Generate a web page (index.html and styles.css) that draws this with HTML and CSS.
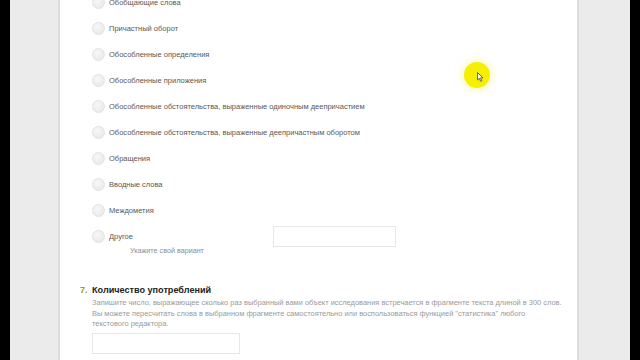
FILE: index.html
```html
<!DOCTYPE html>
<html>
<head>
<meta charset="utf-8">
<link rel="stylesheet" href="styles.css">
</head>
<body>
<div class="frame">
  <div class="edge"></div>
  <div class="side side-left"></div>
  <main class="page">
    <ul class="options">
      <li class="opt"><span class="radio"></span><span>Обобщающие слова</span></li>
      <li class="opt"><span class="radio"></span><span>Причастный оборот</span></li>
      <li class="opt"><span class="radio"></span><span>Обособленные определения</span></li>
      <li class="opt"><span class="radio"></span><span>Обособленные приложения</span></li>
      <li class="opt"><span class="radio"></span><span>Обособленные обстоятельства, выраженные одиночным деепричастием</span></li>
      <li class="opt"><span class="radio"></span><span>Обособленные обстоятельства, выраженные деепричастным оборотом</span></li>
      <li class="opt"><span class="radio"></span><span>Обращения</span></li>
      <li class="opt"><span class="radio"></span><span>Вводные слова</span></li>
      <li class="opt"><span class="radio"></span><span>Междометия</span></li>
      <li class="other">
        <div class="other-label">
          <div class="opt"><span class="radio"></span><span>Другое</span></div>
          <div class="hint">Укажите свой вариант</div>
        </div>
        <div class="input other-input"></div>
      </li>
    </ul>
    <section class="question">
      <h2 class="q-title"><span class="q-num">7.</span>Количество употреблений</h2>
      <p class="q-desc">Запишите число, выражающее сколько раз выбранный вами объект исследования встречается в фрагменте текста длиной в 300 слов.<br>Вы можете пересчитать слова в выбранном фрагменте самостоятельно или воспользоваться функцией "статистика" любого<br>текстового редактора.</p>
      <div class="input count-input"></div>
    </section>
    <div class="cursor-hl">
      <svg class="cursor" width="7" height="10" viewBox="0 0 7 10"><path d="M0.5 0.5 L0.5 8 L2.3 6.3 L3.6 9.3 L4.8 8.8 L3.5 5.9 L6 5.9 Z" fill="#fff" stroke="#444" stroke-width="0.8"/></svg>
    </div>
  </main>
  <div class="side side-right"></div>
  <div class="edge edge-right"></div>
</div>
</body>
</html>
```
FILE: styles.css
```css
html, body {
  margin: 0;
  padding: 0;
  width: 640px;
  height: 360px;
  overflow: hidden;
  background: #000;
  font-family: "Liberation Sans", Arial, sans-serif;
}
.frame {
  display: flex;
  width: 640px;
  height: 360px;
}
.edge { width: 10px; background: #000; flex: none; }
.edge-right { width: 10px; }
.side {
  background: #ebebeb;
  flex: none;
}
.side-left { width: 48px; border-right: 2px solid #dcdcdc; }
.side-right { width: 51px; border-left: 2px solid #dcdcdc; }
.page {
  position: relative;
  width: 517px;
  flex: none;
  background: #fff;
  overflow: hidden;
}
.options {
  list-style: none;
  margin: -11px 0 0 0;
  padding: 0 0 0 32px;
}
.opt {
  display: flex;
  align-items: center;
  gap: 4px;
  height: 26px;
  font-size: 7.5px;
  color: #575757;
}
.radio {
  width: 11px;
  height: 11px;
  border-radius: 50%;
  border: 1px solid #e2e2e2;
  background: radial-gradient(circle at 40% 35%, #f7f7f7, #e6e6e6);
  flex: none;
}
.other {
  display: flex;
  align-items: flex-start;
}
.other-label { width: 181px; flex: none; }
.hint {
  margin: -4px 0 0 38px;
  font-size: 7.2px;
  line-height: 12px;
  color: #8c8c8c;
}
.input {
  border: 1px solid #e6e6e6;
  background: #fff;
  box-sizing: border-box;
}
.other-input {
  width: 123px;
  height: 21px;
  margin-top: 3px;
}
.question {
  margin: 26px 0 0 20px;
}
.q-title {
  margin: 0;
  font-size: 9.1px;
  line-height: 14px;
  font-weight: bold;
  color: #222;
}
.q-num {
  display: inline-block;
  width: 12px;
  color: #a3a000;
}
.q-desc {
  margin: 1px 0 0 12px;
  width: 482px;
  font-size: 7.45px;
  line-height: 10.5px;
  color: #9a9a9a;
}
.count-input {
  margin: 3px 0 0 12px;
  width: 148px;
  height: 21px;
}
.cursor-hl {
  position: absolute;
  left: 404px;
  top: 62px;
  width: 26px;
  height: 26px;
  border-radius: 50%;
  background: #f6ef00;
  box-shadow: 0 0 6px 3px rgba(250, 245, 150, 0.5);
}
.cursor {
  position: absolute;
  left: 13px;
  top: 10px;
}
```
